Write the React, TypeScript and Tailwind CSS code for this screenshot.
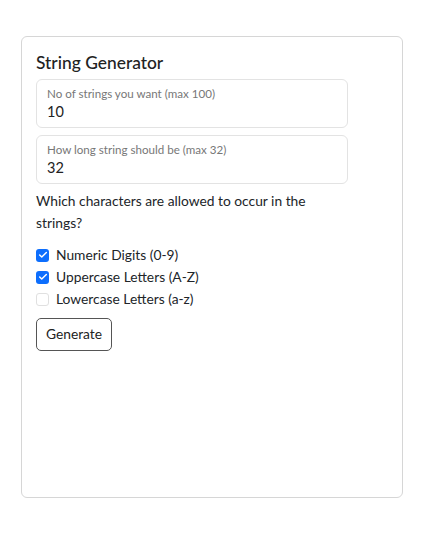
import { Check } from "lucide-react";

type Option = { label: string; checked: boolean };

const options: Option[] = [
  { label: "Numeric Digits (0-9)", checked: true },
  { label: "Uppercase Letters (A-Z)", checked: true },
  { label: "Lowercase Letters (a-z)", checked: false },
];

function Field({ label, value }: { label: string; value: string }) {
  return (
    <div className="flex h-[49px] w-[312px] flex-col rounded-[6px] border border-[#e3e3e3] px-[10px] pt-[7px]">
      <span className="text-[11.6px] leading-[14px] text-[#777]">{label}</span>
      <span className="mt-[2px] text-[14.5px] leading-[18px] text-[#222]">{value}</span>
    </div>
  );
}

export default function App() {
  return (
    <div className="min-h-[538px] bg-white pl-[21px] pt-[36px] font-['Lato',sans-serif] text-[#212529]">
      <div className="flex h-[462px] w-[382px] flex-col rounded-[6px] border border-[#d6d6d6] px-[14px] pt-[14px]">
        <h1 className="text-[17.4px] font-medium leading-[24px] text-[#222]">String Generator</h1>
        <div className="mt-[4px] flex flex-col gap-[7px]">
          <Field label="No of strings you want (max 100)" value="10" />
          <Field label="How long string should be (max 32)" value="32" />
        </div>
        <p className="mt-[6px] w-[300px] text-[13.8px] leading-[22px]">
          Which characters are allowed to occur in the strings?
        </p>
        <div className="mt-[10px] flex flex-col">
          {options.map((o) => (
            <label key={o.label} className="flex h-[22px] items-center gap-[7px] text-[13.8px]">
              <span
                className={
                  o.checked
                    ? "flex h-[13px] w-[13px] items-center justify-center rounded-[3px] bg-[#0d6efd]"
                    : "flex h-[13px] w-[13px] items-center justify-center rounded-[3px] border border-[#e0e0e0] bg-white"
                }
              >
                {o.checked && <Check size={10} strokeWidth={3.5} className="text-white" />}
              </span>
              {o.label}
            </label>
          ))}
        </div>
        <button
          type="button"
          className="mt-[8px] h-[33px] w-[76px] rounded-[5px] border border-[#555] text-[13.8px] text-[#222]"
        >
          Generate
        </button>
      </div>
    </div>
  );
}
